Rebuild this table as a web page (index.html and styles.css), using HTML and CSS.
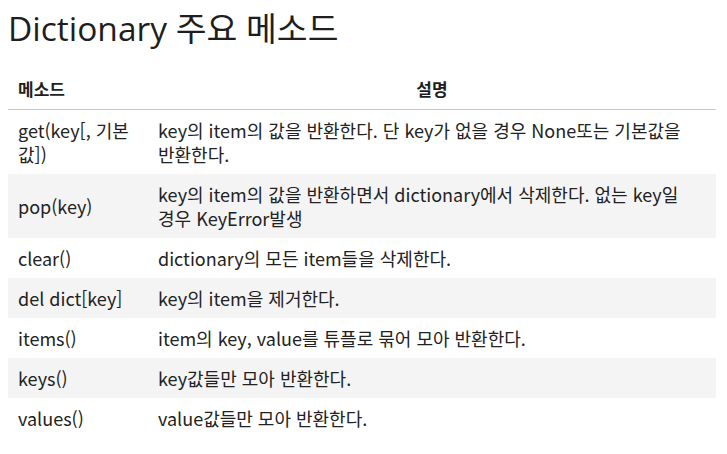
FILE: index.html
```html
<!DOCTYPE html>
<html lang="ko">
<head>
<meta charset="utf-8">
<link rel="stylesheet" href="styles.css">
</head>
<body>
<h1 class="title">Dictionary 주요 메소드</h1>
<table class="methods">
  <thead>
    <tr><th class="col-method">메소드</th><th class="col-desc">설명</th></tr>
  </thead>
  <tbody>
    <tr><td>get(key[, 기본값])</td><td class="desc">key의 item의 값을 반환한다. 단 key가 없을 경우 None또는 기본값을 반환한다.</td></tr>
    <tr><td>pop(key)</td><td class="desc">key의 item의 값을 반환하면서 dictionary에서 삭제한다. 없는 key일 경우 KeyError발생</td></tr>
    <tr><td>clear()</td><td class="desc">dictionary의 모든 item들을 삭제한다.</td></tr>
    <tr><td>del dict[key]</td><td class="desc">key의 item을 제거한다.</td></tr>
    <tr><td>items()</td><td class="desc">item의 key, value를 튜플로 묶어 모아 반환한다.</td></tr>
    <tr><td>keys()</td><td class="desc">key값들만 모아 반환한다.</td></tr>
    <tr><td>values()</td><td class="desc">value값들만 모아 반환한다.</td></tr>
  </tbody>
</table>
</body>
</html>
```
FILE: styles.css
```css
body {
  margin: 8px;
  background: #ffffff;
  color: #222222;
  font-family: "Open Sans", "Noto Sans CJK KR", sans-serif;
}
.title {
  margin: 0 0 21px 0;
  font-size: 33.5px;
  font-weight: 400;
  line-height: 40px;
  color: #1e1e1e;
}
.methods {
  width: 708px;
  table-layout: fixed;
  border-collapse: collapse;
  font-family: "Noto Sans CJK KR", sans-serif;
  font-size: 18px;
  line-height: 24px;
}
.methods th {
  font-size: 17px;
  font-weight: 700;
  padding: 8px 10px;
  border-bottom: 1px solid #c8c8c8;
  color: #1e1e1e;
}
.methods .col-method {
  width: 120px;
  text-align: left;
}
.methods .col-desc {
  text-align: center;
}
.methods td {
  padding: 8px 10px 8px 10px;
  vertical-align: middle;
  text-align: left;
}
.methods .desc {
  word-break: keep-all;
}
.methods tbody tr:nth-child(even) {
  background: #f4f4f4;
}
```
